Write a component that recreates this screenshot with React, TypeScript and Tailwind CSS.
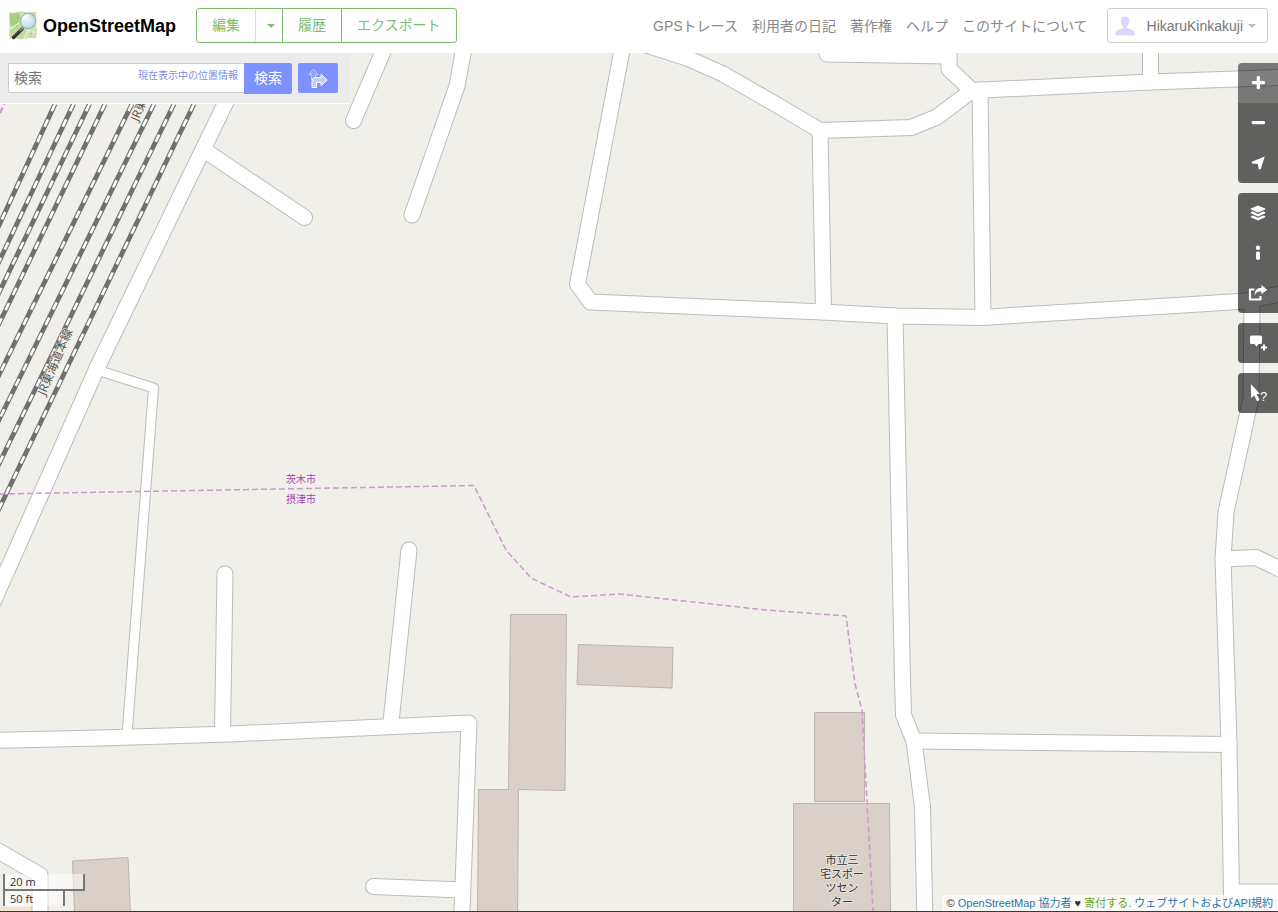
import type { ReactNode } from "react";

const ROADS = [
  "M623 45 L577.5 284 L590.5 302 L823 312 L895 316 L983 317.5 L1020 315 L1200 304 L1245 301 L1290 292",
  "M640 43 L687 58 L723 74 L777 105 L820 130.5 L911 127.5 L937 117 L972 90.5 L949 69 L949 40",
  "M949 56 L827 54 L827 40",
  "M820 130 L823.5 312",
  "M980 90 L983 317",
  "M972 90.5 L1150 82 L1290 77",
  "M1150.5 82 V40",
  "M895 316 L902.5 680 L903.5 715 L914 741 L922.5 807 L925 925",
  "M914 741 L1229 744.5",
  "M1252 300 L1251 398 L1226 512 L1223 559 L1227 680 L1229 744 L1232 925",
  "M1223 559 L1256 557.5 L1290 574",
  "M1232 892 H1290",
  "M250 53 L225 104 L97 368 L-10 609",
  "M207 152 L304.5 217.5",
  "M388 40 L353.5 120.5",
  "M465 40 L463 53 L457 86 L412 215",
  "M225 574 L222.5 733",
  "M409 550 L391 722",
  "M-10 740.5 L100 738 L230 734 L469 723 L461.5 925",
  "M373.5 886.5 L462 890",
  "M-10 847 L0 852 L40 875 V925",
];

const LANES = ["M97 370 L153.5 388 L127 735"];

const RAILS = [
  "M55 104 L-4 232",
  "M73.5 104 L-4 268",
  "M89.5 104 L-4 299",
  "M105 104 L-4 330",
  "M132 104 L-4 381",
  "M154 104 L-4 426",
  "M174 104 L-4 470",
  "M194 104 L-4 515",
];

const BUILDINGS = [
  "M510.5 614.5 H566.5 L565 790.5 L518.5 789.5 L517.5 925 H477.5 L478.5 789.5 H508.5 Z",
  "M578.5 644.5 L673 647.5 L672 688 L577 684.5 Z",
  "M814.5 712.5 H864.5 V801.5 H814.5 Z",
  "M793.5 803.5 H889.5 L890.5 925 H793.5 Z",
  "M72.5 861 L128 857.5 L131 925 H75 Z",
];

const NAV = ["GPSトレース", "利用者の日記", "著作権", "ヘルプ", "このサイトについて"];

const VENUE_LABEL = ["市立三", "宅スポー", "ツセン", "ター"];

function MapCanvas() {
  return (
    <svg
      className="absolute inset-0 size-full font-['Open_Sans','Noto_Sans_CJK_JP',sans-serif]"
      viewBox="0 53 1278 858"
      preserveAspectRatio="xMinYMin slice"
      aria-label="地図"
    >
      <rect x="0" y="53" width="1278" height="870" fill="#f0efea" />
      <path d="M0 907 H34 V925 H0 Z" fill="#f3e3d3" />
      <g fill="#d9d0c9" stroke="#bfb3aa">
        {BUILDINGS.map((d) => (
          <path key={d} d={d} />
        ))}
      </g>
      <g fill="none" strokeLinecap="round" strokeLinejoin="round">
        {ROADS.map((d) => (
          <path key={d} d={d} stroke="#bcbcba" strokeWidth="17" />
        ))}
        {LANES.map((d) => (
          <path key={d} d={d} stroke="#bcbcba" strokeWidth="11" />
        ))}
        {ROADS.map((d) => (
          <path key={d} d={d} stroke="#fff" strokeWidth="15" />
        ))}
        {LANES.map((d) => (
          <path key={d} d={d} stroke="#fff" strokeWidth="9" />
        ))}
      </g>
      <g fill="none">
        {RAILS.map((d) => (
          <path key={d} d={d} stroke="#707070" strokeWidth="4.8" />
        ))}
        {RAILS.map((d) => (
          <path key={d} d={d} stroke="#fff" strokeWidth="2.6" strokeDasharray="8 9" />
        ))}
      </g>
      <g fill="none" stroke="#cd97d0" strokeDasharray="6 3">
        <path
          d="M0 494 L474 485.5 L506 550 L531 578 L571 597 L620 594 L766 610 L846 616 L855 684 L862 710 L868 820 L873.5 920"
          strokeWidth="1.5"
        />
        <path d="M0 113 L5 102" strokeWidth="2" />
      </g>
      <g fontSize="12" fill="#555" stroke="#f4f3ef" strokeWidth="1" paintOrder="stroke">
        <text transform="translate(45 396) rotate(-67)">JR東海道本線</text>
        <text transform="translate(138 122) rotate(-67)">JR東海道本線</text>
      </g>
      <g fontSize="10" fill="#a43fae" textAnchor="middle">
        <text x="301" y="483">茨木市</text>
        <text x="301" y="503">摂津市</text>
      </g>
      <g
        fontSize="11"
        fill="#333"
        stroke="#e8e3de"
        strokeWidth="2"
        paintOrder="stroke"
        textAnchor="middle"
      >
        {VENUE_LABEL.map((line, i) => (
          <text key={line} x="842" y={864 + i * 14}>
            {line}
          </text>
        ))}
      </g>
    </svg>
  );
}

function Logo() {
  return (
    <svg className="size-[30px]" viewBox="0 0 30 30" aria-hidden="true">
      <defs>
        <radialGradient id="lens" cx="0.4" cy="0.35" r="0.7">
          <stop offset="0" stopColor="#f3fafd" />
          <stop offset="1" stopColor="#b5d6e2" />
        </radialGradient>
      </defs>
      <path
        d="M.5 1 Q4 2.500 8 1 Q13 0 16 1 Q21 2.300 26.500 .5 Q28 8 27 14 Q28.500 21 27 27.500 Q21 26 17 27.500 Q11 29 8 27.500 Q4 26.500 .8 28 Q-.3 21 1 15 Q-.3 8 .5 1Z"
        fill="#bfdc9d"
      />
      <path d="M1 2 Q5 3 8 2 L13 9 L8 17 L1 15Z" fill="#a8cf83" />
      <path d="M17 18 L26.500 15 L26.500 27 Q21 25.500 17 27Z" fill="#cbe3ae" />
      <path d="M1 18 L10 12 L14 2 M15 28 L19 19 L27 22" fill="none" stroke="#eef4dc" strokeWidth="1.2" />
      <path d="M9 2 V10 M1 11 H11 M22 20 V27" fill="none" stroke="#9bc579" strokeWidth=".6" />
      <path d="M13 18 L4.500 26.500" stroke="#33312f" strokeWidth="3.4" strokeLinecap="round" />
      <path d="M14.500 16 L10.500 20" stroke="#8a877f" strokeWidth="2.200" />
      <path d="M11 18.500 L4.500 25" stroke="#6f6c69" strokeWidth=".8" />
      <circle cx="19" cy="10" r="7.600" fill="url(#lens)" stroke="#9fb4bb" strokeWidth="1.200" />
      <path d="M14 9 A5.500 5.500 0 0 1 19.500 4.500" fill="none" stroke="#fff" strokeWidth="1.800" />
    </svg>
  );
}

function Caret() {
  return (
    <svg className="h-1 w-2" viewBox="0 0 8 4" fill="currentColor" aria-hidden="true">
      <path d="M0 0 H8 L4 4Z" />
    </svg>
  );
}

function ControlButton({
  label,
  active,
  children,
}: {
  label: string;
  active?: boolean;
  children: ReactNode;
}) {
  return (
    <button
      type="button"
      aria-label={label}
      className={`flex size-10 items-center justify-center ${active ? "bg-black/50" : "bg-black/60"}`}
    >
      <svg className="size-5" viewBox="0 0 20 20" fill="#fff" aria-hidden="true">
        {children}
      </svg>
    </button>
  );
}

function ControlGroup({ children }: { children: ReactNode }) {
  return <div className="flex flex-col overflow-hidden rounded-l-sm">{children}</div>;
}

function Controls() {
  return (
    <div className="absolute top-[10px] right-0 flex flex-col gap-[10px]">
      <ControlGroup>
        <ControlButton label="ズームイン" active>
          <path d="M8.700 4 Q8.700 3 10.300 3 Q12 3 12 4 V8 H16 Q17 8 17 9.600 Q17 11.200 16 11.200 H12 V15.200 Q12 16.200 10.300 16.200 Q8.700 16.200 8.700 15.200 V11.200 H4.700 Q3.700 11.200 3.700 9.600 Q3.700 8 4.700 8 H8.700Z" />
        </ControlButton>
        <ControlButton label="ズームアウト">
          <rect x="3.700" y="8" width="13.300" height="3.300" rx="1.200" />
        </ControlButton>
        <ControlButton label="現在地を表示">
          <path d="M16.700 3.500 L12.900 16 Q11.500 16.800 10.600 15.800 L9.800 11 L4 10.400 Q3.200 9.600 4 8.800Z" />
        </ControlButton>
      </ControlGroup>
      <ControlGroup>
        <ControlButton label="レイヤー">
          <path d="M10 2.500 L17.200 5.500 V6.500 L10 9.600 L2.800 6.500 V5.500Z" />
          <path d="M2.800 9 L5 8.600 L10 10.900 L15 8.600 L17.200 9 V10.200 L10 13.500 L2.800 10.200Z" />
          <path d="M2.800 13 L5 12.500 L10 14.800 L15 12.500 L17.200 13 V14.200 L10 17.500 L2.800 14.200Z" />
        </ControlButton>
        <ControlButton label="凡例">
          <circle cx="10" cy="4.800" r="2.200" />
          <rect x="8" y="8.500" width="4" height="8.500" rx="1.700" />
        </ControlButton>
        <ControlButton label="共有">
          <path
            d="M6.500 6.500 H2 V16.500 H12.500 V13"
            fill="none"
            stroke="#fff"
            strokeWidth="2.200"
            strokeLinejoin="round"
          />
          <path d="M13.500 2 L19.200 6.700 L13.500 11.200 V8.700 Q8.500 8 6.500 12.800 Q6 5 13.500 4.700Z" />
        </ControlButton>
      </ControlGroup>
      <ControlGroup>
        <ControlButton label="メモを追加">
          <path d="M3.500 2.500 H12.500 Q14 2.500 14 4 V9.500 Q14 11 12.500 11 H10.500 L8.300 13.800 L6.500 11 H3.500 Q2 11 2 9.500 V4 Q2 2.500 3.500 2.500Z" />
          <path d="M15 11.500 H17 V13.500 H19 V15.500 H17 V17.500 H15 V15.500 H13 V13.500 H15Z" />
        </ControlButton>
      </ControlGroup>
      <ControlGroup>
        <ControlButton label="地物を検索">
          <path d="M2.800 1 L11.800 10.700 L8.500 11 L11.700 17 L9 18.300 L6.300 12.500 L3.200 15Z" />
          <text x="12" y="18" fontSize="13" className="font-['Liberation_Sans',sans-serif]">
            ?
          </text>
        </ControlButton>
      </ControlGroup>
    </div>
  );
}

function SearchPanel() {
  return (
    <form
      className="absolute top-0 left-0 flex w-[350px] items-start border-b border-white bg-[#ececec] px-2 pt-[10px] pb-[9px]"
      onSubmit={(e) => e.preventDefault()}
    >
      <div className="flex h-[30px] w-[236px] items-center rounded-l-xs border border-r-0 border-[#ccc] bg-white pr-[6px] pl-[5px]">
        <input
          type="text"
          aria-label="検索"
          placeholder="検索"
          className="min-w-0 flex-1 bg-transparent text-sm outline-none placeholder:text-[#757575]"
        />
        <a href="#here" className="mb-1 shrink-0 text-[10px] leading-3 text-[#7b8fe8]">
          現在表示中の位置情報
        </a>
      </div>
      <button
        type="submit"
        className="h-[31px] w-12 rounded-r-xs bg-[#7d92ff] pb-[2px] text-sm text-white"
      >
        検索
      </button>
      <button
        type="button"
        aria-label="経路検索"
        className="ml-[6px] flex h-[30px] w-10 items-center justify-center rounded-xs bg-[#7d92ff]"
      >
        <svg className="size-5" viewBox="0 0 20 20" aria-hidden="true">
          <path
            d="M3.500 12 V6.500 H.8 L5.500 1 L10.200 6.500 H7.500 V9"
            fill="#8fa1ff"
            stroke="#c6d0ff"
            strokeWidth=".9"
          />
          <path
            d="M4 19.500 V13 Q4 9.500 7.500 9.500 H13 V6.500 L19.300 12 L13 17.500 V14.500 H8.500 V19.500Z"
            fill="#c3ceff"
            stroke="#fff"
            strokeWidth="1"
          />
        </svg>
      </button>
    </form>
  );
}

function ScaleBar() {
  return (
    <div className="absolute bottom-[5px] left-[3px] flex flex-col items-start border-l-2 border-[#777] font-['Open_Sans',sans-serif] text-[11px] leading-4 text-[#333]">
      <div className="h-[17px] w-20 border-r-2 border-b-2 border-[#777] bg-white/50 pl-[5px]">20 m</div>
      <div className="h-[15px] w-15 border-r-2 border-[#777] bg-white/50 pl-[5px]">50 ft</div>
    </div>
  );
}

function Header() {
  return (
    <header className="flex h-[53px] items-start bg-white pr-[10px] pl-[9px] pt-2 text-sm">
      <a href="#home" className="flex h-[35px] items-center gap-1 text-lg font-bold text-black">
        <Logo />
        OpenStreetMap
      </a>
      <div className="ml-5 flex h-[35px] items-stretch rounded-[3px] border border-[#7ebc6f] text-[#7ebc6f]">
        <button type="button" className="px-[15px] pb-[2px]">
          編集
        </button>
        <button
          type="button"
          aria-label="編集メニュー"
          className="flex w-7 items-center justify-center border-x border-r-[#7ebc6f] border-l-[#cfe3c9] pl-1"
        >
          <Caret />
        </button>
        <button type="button" className="border-r border-[#7ebc6f] px-[15px] pb-[2px]">
          履歴
        </button>
        <button type="button" className="px-[15px] pb-[2px]">
          エクスポート
        </button>
      </div>
      <nav className="ml-auto flex h-9 items-center gap-[14px] text-[#888]">
        {NAV.map((item) => (
          <a key={item} href="#page">
            {item}
          </a>
        ))}
      </nav>
      <button
        type="button"
        className="ml-[19px] flex h-[35px] items-center rounded-[3px] border border-[#ccc] pr-[11px] pl-[7px] text-[#777]"
      >
        <svg className="mr-3 h-5 w-5" viewBox="0 0 20 20" fill="#d9d6ff" aria-hidden="true">
          <path d="M10 .5 C13.200 .5 14.500 2.800 14.200 5.500 C14 8 13 9.600 12 10.500 V12.300 C14.500 13.300 19 13.500 19.500 16.500 V19.500 H.5 V16.500 C1 13.500 5.500 13.300 8 12.300 V10.500 C7 9.600 6 8 5.800 5.500 C5.500 2.800 6.800 .5 10 .5Z" />
        </svg>
        HikaruKinkakuji
        <span className="ml-[5px] text-[#bbb]">
          <Caret />
        </span>
      </button>
    </header>
  );
}

export default function App() {
  return (
    <div className="flex min-h-screen flex-col font-['Liberation_Sans','Noto_Sans_CJK_JP',sans-serif]">
      <Header />
      <main className="relative flex-1 overflow-hidden border-b border-[#3a3836]">
        <MapCanvas />
        <SearchPanel />
        <Controls />
        <ScaleBar />
        <p className="absolute right-0 bottom-0 bg-white/70 px-[5px] text-[11px] leading-4 text-[#333]">
          ©{" "}
          <a href="#copyright" className="text-[#2779a7]">
            OpenStreetMap 協力者
          </a>{" "}
          ♥{" "}
          <a href="#donate" className="text-[#6aa52a]">
            寄付する
          </a>
          <span className="text-[#6aa52a]">.</span>{" "}
          <a href="#terms" className="text-[#2779a7]">
            ウェブサイトおよびAPI規約
          </a>
        </p>
      </main>
    </div>
  );
}
